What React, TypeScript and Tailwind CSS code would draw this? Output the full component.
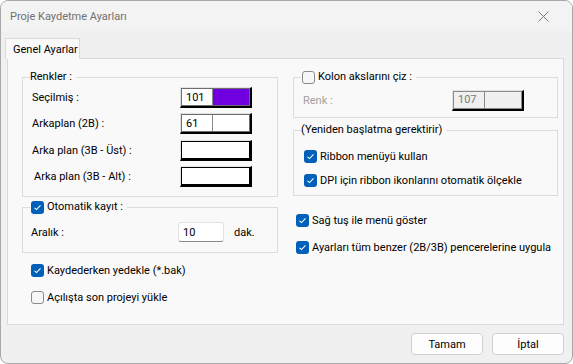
import React from 'react'

const font = { fontFamily: 'Roboto, "Noto Sans", sans-serif' }

function Check({ checked }: { checked: boolean }) {
  if (!checked) {
    return <span className="block w-[13px] h-[13px] shrink-0 rounded-[3px] border border-[#8a8a8a] bg-[#f7f7f7]" />
  }
  return (
    <span className="flex w-[13px] h-[13px] shrink-0 items-center justify-center rounded-[3px] bg-[#005fb8]">
      <svg width="9" height="9" viewBox="0 0 9 9">
        <path d="M1.5 4.8 L3.5 6.6 L7.5 2.4" fill="none" stroke="#fff" strokeWidth="1.1" />
      </svg>
    </span>
  )
}

function CheckRow({ checked, label, className }: { checked: boolean; label: string; className?: string }) {
  return (
    <div className={`flex items-center gap-[3px] whitespace-nowrap ${className ?? ''}`}>
      <Check checked={checked} />
      <span>{label}</span>
    </div>
  )
}

/** Old-style colour picker: index number + swatch inside a raised frame. */
function ColorBox({ value, color, disabled }: { value?: string; color?: string; disabled?: boolean }) {
  return (
    <div className="flex w-[72px] h-[21px] shrink-0 border-l border-t border-[#e3e3e3] border-r-2 border-b-2 border-r-black border-b-black">
      <div className={`flex flex-1 border ${disabled ? 'border-[#8a8a8a] bg-[#f0f0f0]' : value ? 'border-[#6d6d6d] bg-white' : 'border-black bg-white'}`}>
        {value !== undefined && (
          <span className={`flex w-[31px] items-center pl-[4px] border-r border-[#8a8a8a] ${disabled ? 'text-[#7a7a7a]' : ''}`}>
            {value}
          </span>
        )}
        <span className="flex-1" style={{ backgroundColor: color }} />
      </div>
    </div>
  )
}

function Group({ legend, className, children }: { legend: React.ReactNode; className?: string; children: React.ReactNode }) {
  return (
    <div className={`relative border border-[#dcdcdc] ${className ?? ''}`}>
      <div className="absolute -top-[8px] left-[7px] whitespace-nowrap bg-[#f9f9f9] pr-[4px] leading-[14px]">{legend}</div>
      {children}
    </div>
  )
}

export default function App() {
  return (
    <div className="w-[573px] h-[364px] bg-white text-[11px] leading-[15px] text-black" style={font}>
      <div className="flex h-full flex-col overflow-hidden rounded-[8px] border border-[#a8a8a8] bg-[#f0f0f0]">
        {/* title bar */}
        <div className="flex h-[30px] shrink-0 items-center justify-between bg-[#f3f3f3] pl-[9px] pr-[23px]">
          <span className="text-[11px] text-[#707070]">Proje Kaydetme Ayarları</span>
          <svg width="11" height="11" viewBox="0 0 11 11">
            <path d="M0.5 0.5 L10.5 10.5 M10.5 0.5 L0.5 10.5" stroke="#7a7a7a" strokeWidth="1" />
          </svg>
        </div>

        {/* tabs */}
        <div className="flex pl-[4px] pt-[7px]">
          <div className="relative z-10 -mb-px flex h-[21px] w-[75px] items-center whitespace-nowrap border border-b-0 border-[#d9d9d9] bg-[#f9f9f9] pl-[7px]">
            Genel Ayarlar
          </div>
        </div>

        {/* tab page */}
        <div className="ml-[6px] mr-[8px] flex h-[267px] gap-[15px] whitespace-nowrap border border-[#d9d9d9] bg-[#f9f9f9] pl-[14px] pt-[18px]">
          {/* left column */}
          <div className="flex w-[256px] flex-col">
            <Group legend="Renkler :" className="h-[120px] pl-[9px] pr-[25px] pt-[9px]">
              <div className="flex h-[21px] items-center justify-between">
                <span>Seçilmiş :</span>
                <ColorBox value="101" color="#7000e0" />
              </div>
              <div className="mt-[5px] flex h-[21px] items-center justify-between">
                <span>Arkaplan (2B) :</span>
                <ColorBox value="61" color="#ffffff" />
              </div>
              <div className="mt-[6px] flex h-[21px] items-center justify-between">
                <span>Arka plan (3B - Üst) :</span>
                <ColorBox />
              </div>
              <div className="mt-[5px] flex h-[21px] items-center justify-between">
                <span className="pl-[2px]">Arka plan (3B - Alt) :</span>
                <ColorBox />
              </div>
            </Group>

            <Group
              legend={<CheckRow checked label="Otomatik kayıt :" className="pl-[1px]" />}
              className="mt-[10px] h-[46px] pl-[8px] pt-[14px]"
            >
              <div className="flex h-[20px] items-center">
                <span className="w-[147px]">Aralık :</span>
                <div className="flex h-[20px] w-[46px] items-center rounded-[3px] border border-[#e3e3e3] border-b-[#8a8a8a] bg-white pl-[4px]">
                  10
                </div>
                <span className="ml-[10px]">dak.</span>
              </div>
            </Group>

            <CheckRow checked label="Kaydederken yedekle (*.bak)" className="ml-[9px] mt-[10px] h-[14px]" />
            <CheckRow checked={false} label="Açılışta son projeyi yükle" className="ml-[9px] mt-[13px] h-[14px]" />
          </div>

          {/* right column */}
          <div className="flex w-[265px] flex-col">
            <Group
              legend={<CheckRow checked={false} label="Kolon akslarını çiz :" className="pl-[1px]" />}
              className="h-[41px] pl-[9px] pr-[33px] pt-[11px]"
            >
              <div className="flex h-[22px] items-center justify-between">
                <span className="text-[#a0a0a0]">Renk :</span>
                <ColorBox value="107" color="#f0f0f0" disabled />
              </div>
            </Group>

            <Group legend="(Yeniden başlatma gerektirir)" className="mt-[12px] h-[66px] pl-[10px] pt-[18px]">
              <CheckRow checked label="Ribbon menüyü kullan" className="h-[14px]" />
              <CheckRow checked label="DPI için ribbon ikonlarını otomatik ölçekle" className="mt-[10px] h-[14px]" />
            </Group>

            <CheckRow checked label="Sağ tuş ile menü göster" className="ml-[3px] mt-[17px] h-[14px]" />
            <CheckRow checked label="Ayarları tüm benzer (2B/3B) pencerelerine uygula" className="ml-[3px] mt-[13px] h-[14px]" />
          </div>
        </div>

        {/* buttons */}
        <div className="flex justify-end gap-[9px] pr-[8px] pt-[8px]">
          <button className="h-[22px] w-[72px] rounded-[4px] border border-[#d0d0d0] bg-[#fdfdfd]">Tamam</button>
          <button className="h-[22px] w-[72px] rounded-[4px] border border-[#d0d0d0] bg-[#fdfdfd]">İptal</button>
        </div>
      </div>
    </div>
  )
}
